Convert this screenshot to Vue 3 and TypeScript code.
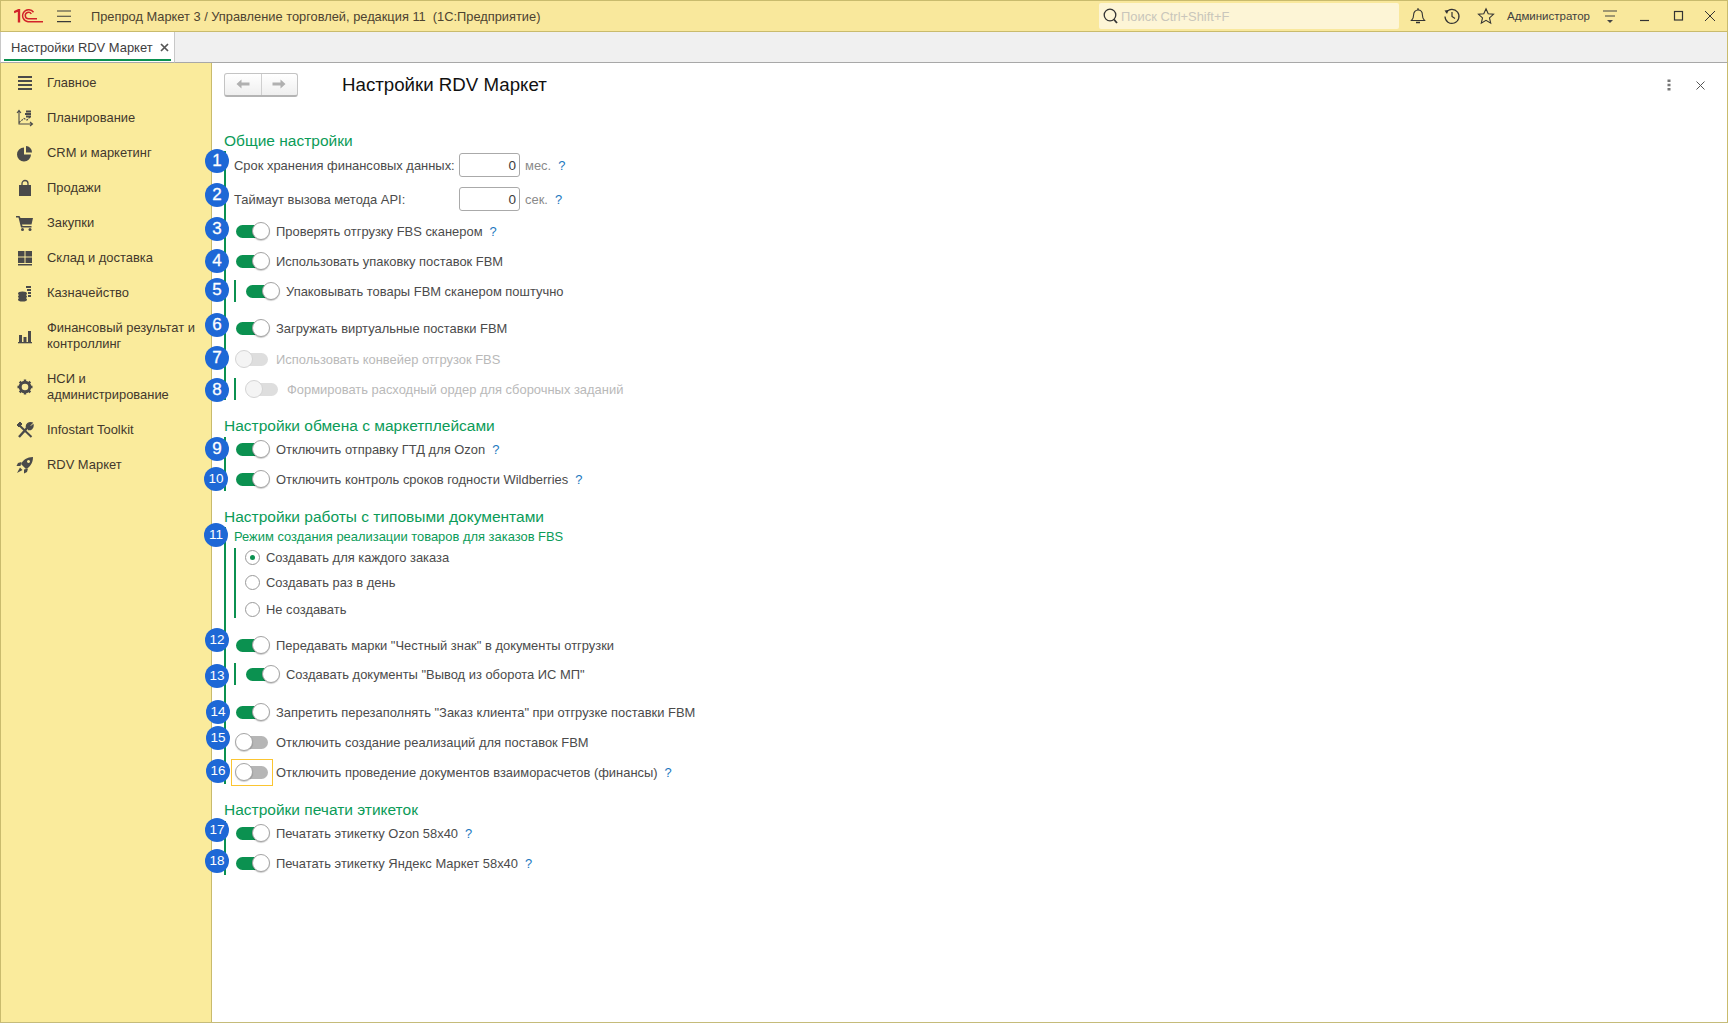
<script setup lang="ts">
interface NavItem { label: string; icon: string }
const nav: NavItem[] = [
  { label: 'Главное', icon: 'menu' },
  { label: 'Планирование', icon: 'plan' },
  { label: 'CRM и маркетинг', icon: 'pie' },
  { label: 'Продажи', icon: 'bag' },
  { label: 'Закупки', icon: 'cart' },
  { label: 'Склад и доставка', icon: 'grid' },
  { label: 'Казначейство', icon: 'coins' },
  { label: 'Финансовый результат и контроллинг', icon: 'bars' },
  { label: 'НСИ и администрирование', icon: 'gear' },
  { label: 'Infostart Toolkit', icon: 'tools' },
  { label: 'RDV Маркет', icon: 'rocket' }
]
interface Badge { n: number; x: number; y: number }
const badges: Badge[] = [
  [1, 217, 161], [2, 217, 195], [3, 217, 229], [4, 217, 261], [5, 217, 290], [6, 217, 325],
  [7, 217, 358], [8, 217, 390], [9, 217, 449], [10, 216, 479], [11, 216, 535], [12, 217, 640],
  [13, 217, 676], [14, 218, 712], [15, 218, 738], [16, 218, 771], [17, 217, 830], [18, 217, 861]
].map(([n, x, y]) => ({ n, x, y }))
</script>

<template>
  <div class="window">
    <header class="titlebar">
      <svg class="logo" width="29" height="14" viewBox="0 0 29 14">
        <path d="M0 3.200 5 1V13.500" fill="none" stroke="#d2232a" stroke-width="2.400"/>
        <path d="M19.500 3.200A6 6 0 1 0 14 12.700H29" fill="none" stroke="#d2232a" stroke-width="1.500"/>
        <path d="M17.300 5A3.200 3.200 0 1 0 14.500 9.700H23" fill="none" stroke="#d2232a" stroke-width="1.500"/>
      </svg>
      <svg class="burger" width="14" height="13" viewBox="0 0 14 13">
        <path d="M0 1H14M0 6.300H14M0 11.600H14" stroke="#3a3a3a" stroke-width="1.100"/>
      </svg>
      <span class="apptitle">Препрод Маркет 3 / Управление торговлей, редакция 11&nbsp; (1С:Предприятие)</span>
      <div class="spacer"></div>
      <div class="search">
        <svg width="18" height="18" viewBox="0 0 18 18">
          <circle cx="8" cy="8" r="5.800" fill="none" stroke="#333" stroke-width="1.300"/>
          <path d="M12 12.500 15 16" stroke="#333" stroke-width="1.800"/>
        </svg>
        <span>Поиск Ctrl+Shift+F</span>
      </div>
      <svg class="ti bell" width="18" height="18" viewBox="0 0 18 18">
        <path d="M2.500 13.500c1.500-1.500 2.100-3 2.100-5.500C4.600 5 6.500 3 9 3s4.400 2 4.400 5c0 2.500.6 4 2.100 5.500Z" fill="none" stroke="#333" stroke-width="1.100"/>
        <path d="M9 1.200V3M7 15.500h4" stroke="#333" stroke-width="1.400"/>
      </svg>
      <svg class="ti hist" width="18" height="18" viewBox="0 0 18 18">
        <path d="M3.200 5.500A7 7 0 1 1 2 9.500" fill="none" stroke="#333" stroke-width="1.200"/>
        <path d="M1.500 3.500 5.500 3 4 7Z" fill="#333"/>
        <path d="M9 5V9.500L12 11.500" fill="none" stroke="#333" stroke-width="1.200"/>
      </svg>
      <svg class="ti star" width="18" height="18" viewBox="0 0 18 18">
        <path d="M9 1.800 11.200 6.800 16.500 7.300 12.500 10.900 13.700 16.200 9 13.400 4.300 16.200 5.500 10.900 1.500 7.300 6.800 6.800Z" fill="none" stroke="#333" stroke-width="1.100"/>
      </svg>
      <span class="user">Администратор</span>
      <svg class="ti filt" width="16" height="16" viewBox="0 0 16 16">
        <path d="M1 3H15M3 8H13" stroke="#444" stroke-width="1.200"/>
        <path d="M5 12H11L8 15Z" fill="#444"/>
      </svg>
      <svg class="ti wmin" width="12" height="12" viewBox="0 0 12 12"><path d="M1 10.500H10" stroke="#333" stroke-width="1.200"/></svg>
      <svg class="ti wmax" width="12" height="12" viewBox="0 0 12 12"><rect x="1.500" y="1.500" width="8" height="8.500" fill="none" stroke="#333" stroke-width="1.200"/></svg>
      <svg class="ti wclose" width="12" height="12" viewBox="0 0 12 12"><path d="M1 1 11 11M11 1 1 11" stroke="#333" stroke-width="1"/></svg>
    </header>

    <div class="tabbar">
      <div class="tab">
        <span>Настройки RDV Маркет</span>
        <svg width="9" height="9" viewBox="0 0 9 9"><path d="M1 1 8 8M8 1 1 8" stroke="#555" stroke-width="1.700"/></svg>
      </div>
    </div>

    <div class="body">
      <nav class="sidebar">
        <a v-for="item in nav" :key="item.label" class="navitem" :class="{ tall: item.label.length > 20 }">
          <svg class="navicon" width="18" height="18" viewBox="0 0 18 18">
            <path v-if="item.icon === 'menu'" d="M2 3H16M2 7H16M2 11H16M2 15H16" stroke="#4a4a4a" stroke-width="2"/>
            <g v-else-if="item.icon === 'plan'" fill="none" stroke="#4a4a4a" stroke-width="1.100">
              <path d="M3 1.500V15H16M1 4 3 1.500 5 4M14 13 16.500 15 14 17"/>
              <path d="M3 13.500 8 9.500 11 11 14 8" stroke-dasharray="2 1"/>
              <path d="M10 2.500h5M9 5h6M10 7.500h5" stroke-width="2"/>
            </g>
            <g v-else-if="item.icon === 'pie'" fill="#4a4a4a">
              <path d="M8 3.500A7 7 0 1 0 15 10.500H8Z"/>
              <path d="M10 2A6.500 6.500 0 0 1 16 8.500H10Z"/>
            </g>
            <g v-else-if="item.icon === 'bag'">
              <path d="M3 6H15V17H3Z" fill="#4a4a4a"/>
              <path d="M6 8V4.500a3 3 0 0 1 6 0V8" fill="none" stroke="#4a4a4a" stroke-width="1.300"/>
            </g>
            <g v-else-if="item.icon === 'cart'" fill="#4a4a4a">
              <path d="M0 2H3.500L4.500 4H17L15.500 10.500H6L6.500 12H15.500V13.500H5L2.500 3.500H0Z"/>
              <circle cx="6.500" cy="15.500" r="1.500"/>
              <circle cx="14" cy="15.500" r="1.500"/>
            </g>
            <g v-else-if="item.icon === 'grid'" fill="#4a4a4a">
              <rect x="2" y="2" width="6.500" height="5.500"/>
              <rect x="9.500" y="2" width="6.500" height="5.500"/>
              <rect x="2" y="8.500" width="6.500" height="5.500"/>
              <rect x="9.500" y="8.500" width="6.500" height="5.500"/>
              <rect x="2" y="15" width="14" height="1.500"/>
            </g>
            <g v-else-if="item.icon === 'coins'" fill="none" stroke="#4a4a4a" stroke-width="2">
              <ellipse cx="6.500" cy="9.500" rx="3.500" ry="1"/>
              <ellipse cx="6.500" cy="12.500" rx="3.500" ry="1"/>
              <ellipse cx="6.500" cy="15.500" rx="3.500" ry="1"/>
              <path d="M10 3h5M11 6h4M12 9h3M12 12h3" stroke-width="1.900"/>
            </g>
            <g v-else-if="item.icon === 'bars'" fill="#4a4a4a">
              <rect x="3" y="8" width="3" height="7"/>
              <rect x="7.500" y="10" width="3" height="5"/>
              <rect x="12" y="4" width="3" height="11"/>
              <rect x="2" y="15" width="14" height="1.300"/>
            </g>
            <g v-else-if="item.icon === 'gear'">
              <circle cx="9" cy="9" r="4.800" fill="none" stroke="#4a4a4a" stroke-width="3"/>
              <path d="M9 1.500V16.500M1.500 9H16.500M3.700 3.700 14.300 14.300M14.300 3.700 3.700 14.300" stroke="#4a4a4a" stroke-width="2.400" stroke-dasharray="3 9"/>
            </g>
            <g v-else-if="item.icon === 'tools'" stroke="#4a4a4a" fill="none">
              <path d="M3 16 12 6" stroke-width="2.400"/>
              <path d="M10.500 6.500A4 4 0 0 1 16 2L13.500 4.500 14.500 6 17 4A4 4 0 0 1 12 8.500" stroke-width="1.400" fill="#4a4a4a"/>
              <path d="M2 3 15.500 16" stroke-width="2"/>
              <path d="M1 4 4 1 6 3 3 6Z" fill="#4a4a4a"/>
            </g>
            <g v-else fill="#4a4a4a">
              <path fill-rule="evenodd" d="M17 1C11 1 7 4 5 8L10 13C14 11 17 7 17 1ZM12.500 4a1.500 1.500 0 1 0 .01 0Z"/>
              <path d="M5.500 6 2 7 .5 10 4.500 10ZM12 12.500 11 16 8 17.500 8 13.500Z"/>
              <path d="M4 11.500 6.500 14 1 17Z"/>
            </g>
          </svg>
          <span class="navlabel">{{ item.label }}</span>
        </a>
      </nav>

      <main class="main">
        <div class="toolbar">
          <div class="navbtns">
            <button class="nb"><svg width="16" height="12" viewBox="0 0 16 12"><path d="M1.500 6 6.500 1.500V4.500H14.500V7.500H6.500V10.500Z" fill="#b0b0b0"/></svg></button>
            <button class="nb"><svg width="16" height="12" viewBox="0 0 16 12"><path d="M14.500 6 9.500 1.500V4.500H1.500V7.500H9.500V10.500Z" fill="#b0b0b0"/></svg></button>
          </div>
          <h1 class="pagetitle">Настройки RDV Маркет</h1>
          <div class="spacer"></div>
          <svg class="more" width="4" height="12" viewBox="0 0 4 12"><path d="M.5.500h3v2.500h-3zM.5 4.800h3v2.500h-3zM.5 9h3v2.500h-3z" fill="#777"/></svg>
          <svg class="pclose" width="9" height="9" viewBox="0 0 9 9"><path d="M.5.500 8.500 8.500M8.500.500.500 8.500" stroke="#555" stroke-width="1"/></svg>
        </div>

        <div class="form">
          <h2 class="head first">Общие настройки</h2>
          <div class="group pt2">
            <div class="row">
              <label class="fl">Срок хранения финансовых данных:</label>
              <input class="num" value="0" />
              <span class="unit">мес.</span><span class="q q2">?</span>
            </div>
            <div class="row m10">
              <label class="fl">Таймаут вызова метода API:</label>
              <input class="num" value="0" />
              <span class="unit">сек.</span><span class="q q2">?</span>
            </div>
            <div class="row m8"><i class="sw on"></i><span>Проверять отгрузку FBS сканером</span><span class="q">?</span></div>
            <div class="row"><i class="sw on"></i><span>Использовать упаковку поставок FBM</span></div>
            <div class="row sub"><i class="sw on"></i><span>Упаковывать товары FBM сканером поштучно</span></div>
            <div class="row"><i class="sw on"></i><span>Загружать виртуальные поставки FBM</span></div>
            <div class="row dis m7"><i class="sw"></i><span>Использовать конвейер отгрузок FBS</span></div>
            <div class="row sub dis"><i class="sw"></i><span class="lbl1">Формировать расходный ордер для сборочных заданий</span></div>
          </div>

          <h2 class="head">Настройки обмена с маркетплейсами</h2>
          <div class="group m1">
            <div class="row"><i class="sw on"></i><span>Отключить отправку ГТД для Ozon</span><span class="q">?</span></div>
            <div class="row"><i class="sw on"></i><span>Отключить контроль сроков годности Wildberries</span><span class="q">?</span></div>
          </div>

          <h2 class="head">Настройки работы с типовыми документами</h2>
          <div class="group">
            <div class="subhead">Режим создания реализации товаров для заказов FBS</div>
            <div class="radios">
              <div class="radio sel"><i class="rd"></i><span>Создавать для каждого заказа</span></div>
              <div class="radio"><i class="rd"></i><span>Создавать раз в день</span></div>
              <div class="radio r9"><i class="rd"></i><span>Не создавать</span></div>
            </div>
            <div class="row m15"><i class="sw on"></i><span>Передавать марки "Честный знак" в документы отгрузки</span></div>
            <div class="row sub tight"><i class="sw on"></i><span>Создавать документы "Вывод из оборота ИС МП"</span></div>
            <div class="row m15"><i class="sw on"></i><span>Запретить перезаполнять "Заказ клиента" при отгрузке поставки FBM</span></div>
            <div class="row"><i class="sw"></i><span>Отключить создание реализаций для поставок FBM</span></div>
            <div class="row"><i class="sw focus"></i><span>Отключить проведение документов взаиморасчетов (финансы)</span><span class="q">?</span></div>
          </div>

          <h2 class="head">Настройки печати этикеток</h2>
          <div class="group m1 last">
            <div class="row"><i class="sw on"></i><span>Печатать этикетку Ozon 58x40</span><span class="q">?</span></div>
            <div class="row"><i class="sw on"></i><span>Печатать этикетку Яндекс Маркет 58x40</span><span class="q">?</span></div>
          </div>
        </div>

        <span
          v-for="b in badges"
          :key="b.n"
          class="badge"
          :class="{ small: b.n > 9 }"
          :style="{ left: b.x - 212 - 12 + 'px', top: b.y - 63 - 12 + 'px' }"
        >{{ b.n }}</span>
      </main>
    </div>
  </div>
</template>

<style scoped>
.window {
  width: 1728px;
  height: 1023px;
  box-sizing: border-box;
  display: flex;
  flex-direction: column;
  overflow: hidden;
  background: #fff;
  font-family: "Liberation Sans", Arial, sans-serif;
  font-size: 12.930px;
  color: #4b4b4b;
  border-bottom: 1px solid #c5bb7a;
}
.titlebar {
  height: 32px;
  flex: none;
  box-sizing: border-box;
  display: flex;
  align-items: center;
  background: #f9e89c;
  border-top: 1px solid #c9bb6d;
  border-bottom: 1px solid #c9bb6d;
  border-left: 1px solid #c9bb6d;
  border-right: 1px solid #c9bb6d;
  position: relative;
}
.logo { margin-left: 13px; flex: none; }
.burger { margin-left: 14px; flex: none; }
.apptitle { margin-left: 20px; color: #4d4330; font-size: 12.830px; white-space: nowrap; padding-top: 1px; }
.spacer { flex: 1; }
.search {
  width: 300px;
  height: 26px;
  box-sizing: border-box;
  background: #fdf5d6;
  border-radius: 2px;
  display: flex;
  align-items: center;
  padding-left: 3px;
  gap: 1px;
  color: #c9c6bb;
  margin-right: 10px;
}
.ti { flex: none; }
.hist { margin-left: 16px; }
.star { margin-left: 16px; }
.user { margin-left: 12px; font-size: 11.500px; color: #3f3f3f; white-space: nowrap; }
.filt { margin-left: 12px; }
.wmin { margin-left: 21px; }
.wmax { margin-left: 22px; }
.wclose { margin-left: 19px; margin-right: 11px; }

.tabbar {
  height: 31px;
  flex: none;
  box-sizing: border-box;
  background: #f0f0f0;
  border-bottom: 1px solid #a8a8a8;
  border-right: 1px solid #c9bb6d;
  display: flex;
}
.tab {
  width: 175px;
  height: 31px;
  box-sizing: border-box;
  background: #fff;
  border-right: 1px solid #c8c8c8;
  border-left: 1px solid #c8c8c8;
  border-bottom: 1px solid #a8a8a8;
  display: flex;
  align-items: center;
  padding: 0 0 0 10px;
  gap: 7px;
  position: relative;
  color: #3d3d3d;
}
.tab::after {
  content: "";
  position: absolute;
  left: 3px;
  right: 3px;
  bottom: 1px;
  height: 2px;
  background: #0b9150;
}

.body { flex: 1; display: flex; min-height: 0; }
.sidebar {
  width: 212px;
  flex: none;
  box-sizing: border-box;
  background: #faeb9c;
  border-left: 1px solid #c9bb6d;
  border-right: 1px solid #c9bb6d;
  padding-top: 2px;
  color: #42382c;
}
.navitem {
  display: flex;
  align-items: center;
  height: 35px;
  padding-left: 15px;
}
.navitem.tall { height: 51px; }
.navicon { flex: none; }
.navlabel { margin-left: 13px; line-height: 16px; width: 152px; }

.main { flex: 1; position: relative; border-right: 1px solid #c9bb6d; }
.toolbar {
  display: flex;
  align-items: center;
  height: 24px;
  margin-top: 10px;
  padding-left: 12px;
}
.navbtns {
  display: flex;
  width: 74px;
  height: 24px;
  margin-top: -1px;
  box-sizing: border-box;
  border: 1px solid #c4c4c4;
  border-bottom: 2px solid #b4b4b4;
  border-radius: 3px;
  background: linear-gradient(#fff, #efefef);
}
.nb {
  flex: 1;
  padding: 0;
  border: 0;
  background: none;
  display: flex;
  align-items: center;
  justify-content: center;
}
.nb + .nb { border-left: 1px solid #cfcfcf; }
.pagetitle {
  margin: 0 0 0 44px;
  font-size: 18.700px;
  font-weight: 400;
  color: #111;
  white-space: nowrap;
}
.more { margin-right: 25px; }
.pclose { margin-right: 22px; }

.form { padding: 34px 0 0 12px; }
.head {
  margin: 16px 0 0;
  height: 20px;
  line-height: 20px;
  font-size: 15.500px;
  font-weight: 400;
  color: #0b9b58;
  white-space: nowrap;
}
.head.first { margin-top: 0; }
.group { border-left: 2px solid #0b9150; padding-left: 8px; }
.group.pt2 { padding-top: 2px; }
.group.m1 { margin-top: 1px; }
.group.last { margin-bottom: -2px; }
.row {
  display: flex;
  align-items: center;
  height: 24px;
  margin-top: 6px;
  white-space: nowrap;
}
.group > .row:first-child { margin-top: 0; }
.row.m7 { margin-top: 7px; }
.row.m8 { margin-top: 8px; }
.row.m10 { margin-top: 10px; }
.row.m15 { margin-top: 15px; }
.row.sub {
  height: 22px;
  margin-top: 7px;
  margin-bottom: 1px;
  border-left: 2px solid #0b9150;
  padding-left: 8px;
}
.row.sub.tight { margin-top: 6px; }
.row.sub + .row { margin-top: 14px; }
.row.sub + .row.m15 { margin-top: 15px; }
.fl { width: 225px; flex: none; }
.num {
  width: 61px;
  height: 24px;
  box-sizing: border-box;
  border: 1px solid #aaa;
  border-radius: 3px;
  padding: 0 3px;
  text-align: right;
  font: 13.500px "Liberation Sans", Arial, sans-serif;
  color: #3c3c3c;
  outline: none;
}
.unit { margin-left: 5px; color: #8a8a8a; }
.q { margin-left: 7px; color: #1c78c0; }

.sw {
  position: relative;
  display: block;
  flex: none;
  width: 32px;
  height: 13px;
  border-radius: 7px;
  margin: 0 8px 0 2px;
  background: #b6b6b6;
}
.sw::after {
  content: "";
  position: absolute;
  left: -1px;
  top: -3px;
  width: 18px;
  height: 18px;
  box-sizing: border-box;
  border-radius: 50%;
  background: #fff;
  border: 1px solid #a4a4a4;
  box-shadow: 0 1px 1px rgba(0, 0, 0, .2);
}
.sw.on { background: #0b9150; }
.sw.on::after { left: 16px; }
.sw.focus::before {
  content: "";
  position: absolute;
  left: -5px;
  top: -7px;
  width: 40px;
  height: 25px;
  border: 1px solid #fbc531;
}
.dis { color: #b9b9b9; }
.dis .sw { background: #dedede; }
.dis .sw::after { background: #f4f4f4; border-color: #d4d4d4; box-shadow: none; }
.dis .lbl1 { margin-left: 1px; }

.subhead { height: 20px; line-height: 20px; color: #0b9b58; white-space: nowrap; }
.radios {
  margin-top: 1px;
  border-left: 2px solid #0b9150;
  padding-left: 9px;
}
.radio {
  display: flex;
  align-items: center;
  height: 18px;
  margin-top: 7px;
  white-space: nowrap;
}
.radio:first-child { margin-top: 0; }
.radio.r9 { margin-top: 9px; }
.rd {
  position: relative;
  display: block;
  flex: none;
  width: 15px;
  height: 15px;
  box-sizing: border-box;
  border: 1px solid #9a9a9a;
  border-radius: 50%;
  margin-right: 6px;
}
.radio.sel .rd::after {
  content: "";
  position: absolute;
  left: 4px;
  top: 4px;
  width: 5px;
  height: 5px;
  border-radius: 50%;
  background: #0b9150;
}
.badge {
  position: absolute;
  width: 24px;
  height: 24px;
  border-radius: 50%;
  background: #1e68d6;
  color: #fff;
  font-size: 17px;
  line-height: 24px;
  text-align: center;
  -webkit-text-stroke: .3px #fff;
}
.badge.small { font-size: 13.500px; -webkit-text-stroke: 0; }
</style>

<style>
html, body { margin: 0; padding: 0; background: #fff; }
</style>
